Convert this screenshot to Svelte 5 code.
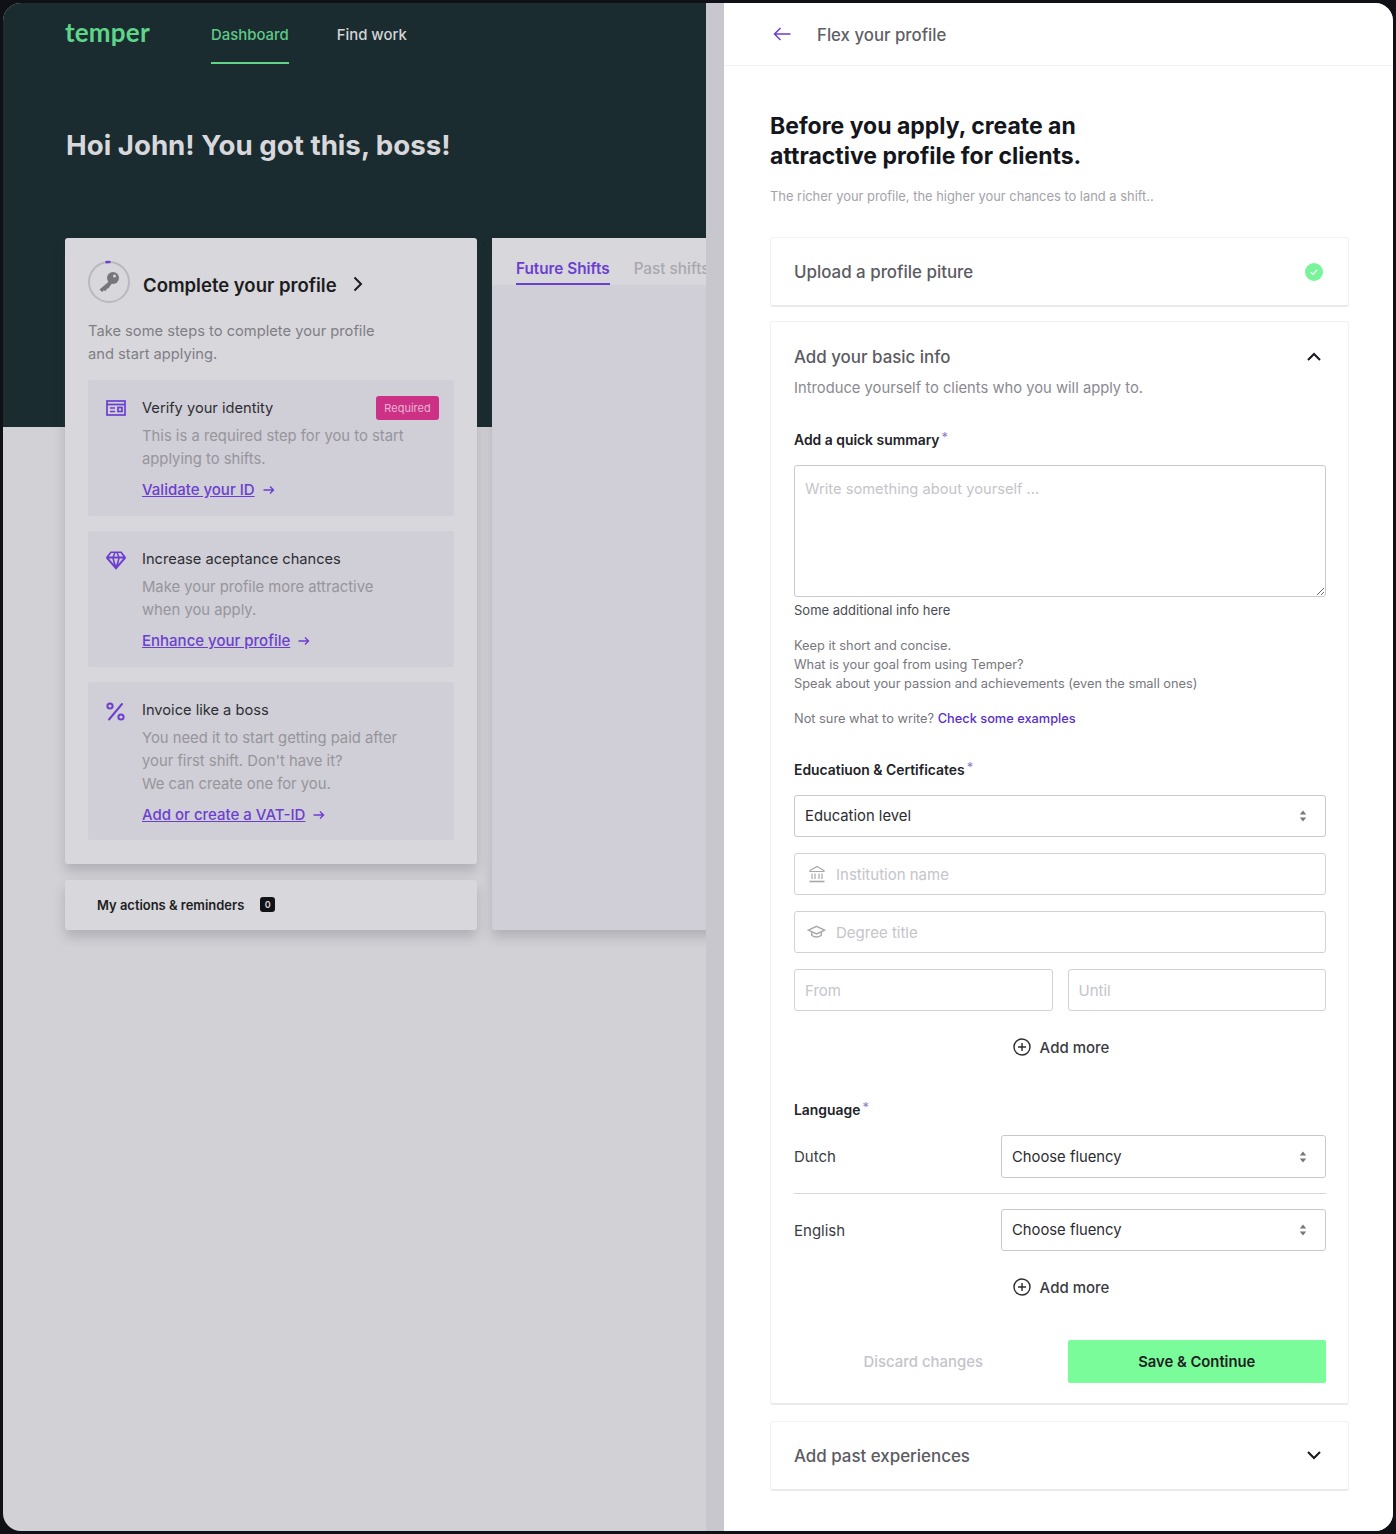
<script lang="ts">
	const steps = [
		{
			icon: 'id',
			title: 'Verify your identity',
			lines: ['This is a required step for you to start', 'applying to shifts.'],
			link: 'Validate your ID',
			required: true
		},
		{
			icon: 'gem',
			title: 'Increase aceptance chances',
			lines: ['Make your profile more attractive', 'when you apply.'],
			link: 'Enhance your profile'
		},
		{
			icon: 'pct',
			title: 'Invoice like a boss',
			lines: ["You need it to start getting paid after", "your first shift. Don't have it?", 'We can create one for you.'],
			link: 'Add or create a VAT-ID'
		}
	];
</script>

{#snippet updown()}
	<svg class="updown" width="8" height="12" viewBox="0 0 8 12"><path d="M4 0.5 7.2 4.5H0.8Z M4 11.5 0.8 7.5H7.2Z" fill="#77767d" /></svg>
{/snippet}

{#snippet addMore()}
	<div class="add-more">
		<svg width="18" height="18" viewBox="0 0 18 18" fill="none" stroke="#2b2c31" stroke-width="1.4"><circle cx="9" cy="9" r="8" /><path d="M9 5v8M5 9h8" /></svg>
		<span>Add more</span>
	</div>
{/snippet}

<div class="window">
	<div class="page">
		<header class="hero">
			<nav>
				<span class="logo">temper</span>
				<span class="tab active">Dashboard</span>
				<span class="tab">Find work</span>
			</nav>
			<h1>Hoi John! You got this, boss!</h1>
		</header>

		<div class="columns">
			<div class="col">
				<section class="profile card">
					<div class="profile-head">
						<svg class="ring" width="44" height="44" viewBox="0 0 44 44" fill="none">
							<circle cx="22" cy="22" r="20" stroke="#b9b8bf" stroke-width="2" />
							<path d="M18.5 2.3a20 20 0 0 1 5-.2" stroke="#6b3fd0" stroke-width="2.4" />
							<circle cx="26" cy="18" r="6" fill="#77767c" />
							<path d="M22.5 21 12.500 29.500l2.500 2.500 2-1.800 1.500 1 1.500-2.500 1.500-.5 3.500-5Z" fill="#77767c" />
							<circle cx="27.500" cy="16" r="1.500" fill="#d8d7dc" />
						</svg>
						<h2>Complete your profile</h2>
						<svg class="chev" width="12" height="16" viewBox="0 0 12 16" fill="none" stroke="#1b1c21" stroke-width="2"><path d="M2.500 1.500 9 8l-6.500 6.500" /></svg>
					</div>
					<p class="profile-desc">Take some steps to complete your profile<br />and start applying.</p>

					<div class="steps">
						{#each steps as step}
							<article class="step">
								<div class="step-icon">
									{#if step.icon === 'id'}
										<svg width="20" height="16" viewBox="0 0 20 16" fill="none" stroke="#6b3fd0" stroke-width="1.700">
											<rect x="1" y="1" width="18" height="14" />
											<path d="M1 4.500h18" />
											<path d="M4 8h5M4 11.500h5" />
											<rect x="12" y="7.500" width="4" height="4" />
										</svg>
									{:else if step.icon === 'gem'}
										<svg width="20" height="19" viewBox="0 0 20 19" fill="#6b3fd0">
											<path fill-rule="evenodd" d="M4.500 0.500h11L19.800 6v1.500L10 18.800 0.200 7.500V6ZM5.400 2 2.800 5.600H6.500L8 2ZM12 2l1.500 3.600h3.700L14.600 2ZM9.600 2 8.100 5.600h3.800L10.400 2ZM2.900 7.600 7.800 13.200 6.300 7.600ZM7.900 7.600l2.100 7 2.100-7ZM13.700 7.600l-1.500 5.600 4.900-5.600Z" />
										</svg>
									{:else}
										<svg width="19" height="19" viewBox="0 0 19 19" fill="none" stroke="#6b3fd0" stroke-width="2">
											<circle cx="4" cy="4" r="2.600" />
											<circle cx="15" cy="15" r="2.600" />
											<path d="M16 2 3 17.500" stroke-linecap="round" />
										</svg>
									{/if}
								</div>
								<div class="step-body">
									<div class="step-title">
										<h3>{step.title}</h3>
										{#if step.required}<span class="required">Required</span>{/if}
									</div>
									<p>
										{#each step.lines as line}{line}<br />{/each}
									</p>
									<div class="step-link">
										<a href="#top">{step.link}</a>
										<svg width="12" height="10" viewBox="0 0 12 10" fill="none" stroke="#6b3fd0" stroke-width="1.400"><path d="M0.500 5h10M7 1.500 10.500 5 7 8.500" /></svg>
									</div>
								</div>
							</article>
						{/each}
					</div>
				</section>

				<section class="actions card">
					<span>My actions &amp; reminders</span>
					<span class="count">0</span>
				</section>
			</div>

			<section class="shifts">
				<div class="shift-tabs">
					<span class="shift-tab active">Future Shifts</span>
					<span class="shift-tab">Past shifts</span>
				</div>
			</section>
		</div>
	</div>

	<div class="gutter"></div>

	<aside class="panel">
		<div class="panel-head">
			<svg width="18" height="14" viewBox="0 0 18 14" fill="none" stroke="#6b3fd0" stroke-width="1.500"><path d="M17.500 7H1.500M7.500 1 1.500 7l6 6" /></svg>
			<span>Flex your profile</span>
		</div>

		<div class="panel-body">
			<h2 class="panel-title">Before you apply, create an<br />attractive profile for clients.</h2>
			<p class="panel-sub">The richer your profile, the higher your chances to land a shift..</p>

			<section class="acc acc-row upload">
				<h3>Upload a profile piture</h3>
				<svg width="18" height="18" viewBox="0 0 18 18" fill="none"><circle cx="9" cy="9" r="9" fill="#78f59a" /><path d="M5.800 9.300 8 11.400l4.200-4.800" stroke="#fff" stroke-width="1.300" /></svg>
			</section>

			<section class="acc basic">
				<div class="basic-head">
					<h3>Add your basic info</h3>
					<svg width="14" height="9" viewBox="0 0 14 9" fill="none" stroke="#17181d" stroke-width="2"><path d="M1 8 7 2l6 6" /></svg>
				</div>
				<p class="basic-sub">Introduce yourself to clients who you will apply to.</p>

				<div class="label summary-label">Add a quick summary<sup>*</sup></div>
				<textarea placeholder="Write something about yourself ..."></textarea>
				<div class="help">Some additional info here</div>
				<p class="tips">
					Keep it short and concise.<br />
					What is your goal from using Temper?<br />
					Speak about your passion and achievements (even the small ones)
				</p>
				<p class="tips not-sure">Not sure what to write? <a href="#top">Check some examples</a></p>

				<div class="label edu-label">Educatiuon &amp; Certificates<sup>*</sup></div>
				<div class="fields">
					<div class="field select">Education level {@render updown()}</div>
					<div class="field ph">
						<svg class="bank" width="18" height="18" viewBox="0 0 18 18" fill="none" stroke="#a9a8ae" stroke-width="1.200">
							<path d="M2 5.500 9 1.500l7 4v1H2Z" />
							<path d="M4 8.500v5.500M7 8.500v5.500M11 8.500v5.500M14 8.500v5.500" />
							<path d="M1.500 16.500h15" stroke-width="1.600" />
						</svg>
						<input placeholder="Institution name" />
					</div>
					<div class="field ph">
						<svg class="cap" width="19" height="16" viewBox="0 0 20 16" fill="none" stroke="#a9a8ae" stroke-width="1.500">
							<path d="M1.500 6 10 2l8.500 4L10 10Z" />
							<path d="M5 8v3.500c2.800 2.400 7.200 2.400 10 0V8" />
						</svg>
						<input placeholder="Degree title" />
					</div>
					<div class="field-pair">
						<div class="field ph"><input placeholder="From" /></div>
						<div class="field ph"><input placeholder="Until" /></div>
					</div>
				</div>
				{@render addMore()}

				<div class="label lang-label">Language<sup>*</sup></div>
				<div class="lang-row">
					<span>Dutch</span>
					<div class="field select">Choose fluency {@render updown()}</div>
				</div>
				<div class="lang-row second">
					<span>English</span>
					<div class="field select">Choose fluency {@render updown()}</div>
				</div>
				{@render addMore()}

				<div class="form-actions">
					<span class="discard">Discard changes</span>
					<button>Save &amp; Continue</button>
				</div>
			</section>

			<section class="acc acc-row past">
				<h3>Add past experiences</h3>
				<svg width="14" height="9" viewBox="0 0 14 9" fill="none" stroke="#17181d" stroke-width="2"><path d="M1 1l6 6 6-6" /></svg>
			</section>
		</div>
	</aside>
</div>

<style>
	:global(body) {
		margin: 0;
		background: #0f1117;
		font-family: Inter, 'Noto Sans', sans-serif;
	}

	.window {
		box-sizing: border-box;
		width: 1390px;
		height: 1528px;
		margin: 3px;
		display: flex;
		border-radius: 18px;
		overflow: hidden;
		background: #d2d1d6;
	}

	.page {
		width: 703px;
		flex: none;
		overflow: hidden;
	}

	.gutter {
		width: 18px;
		flex: none;
		background: #c8c7cd;
	}

	.hero {
		height: 424px;
		box-sizing: border-box;
		padding-left: 62px;
		background: #1a2c30;
	}

	nav {
		display: flex;
		align-items: flex-start;
		height: 61px;
	}

	.logo {
		width: 146px;
		margin-top: 14px;
		font-family: Lato, sans-serif;
		font-size: 26px;
		line-height: 30px;
		font-weight: 700;
		color: #5fd589;
		letter-spacing: 0.2px;
	}

	.tab {
		box-sizing: border-box;
		height: 61px;
		margin-right: 48px;
		padding-top: 22px;
		font-size: 14.900px;
		line-height: 20px;
		font-weight: 500;
		color: #d4d4d7;
	}

	.tab.active {
		color: #5fc986;
		border-bottom: 2px solid #5fd589;
	}

	.hero h1 {
		margin: 63px 0 0 1px;
		font-size: 27.700px;
		line-height: 36px;
		font-weight: 700;
		color: #d8d7db;
	}

	.columns {
		display: flex;
		gap: 15px;
		margin: -189px 0 0 62px;
		align-items: flex-start;
	}

	.col {
		width: 412px;
		flex: none;
		display: flex;
		flex-direction: column;
		gap: 16px;
	}

	.card {
		background: #d8d7dc;
		border-radius: 3px;
		box-shadow: 0 7px 12px rgba(60, 60, 70, 0.22);
	}

	.profile {
		box-sizing: border-box;
		height: 626px;
		padding: 22px 23px;
	}

	.profile-head {
		display: flex;
		align-items: center;
		height: 44px;
	}

	.profile-head .ring {
		margin-left: -1px;
	}

	.profile-head h2 {
		margin: 5px 15px 0 12px;
		font-size: 18.500px;
		font-weight: 600;
		color: #1b1c21;
	}

	.profile-head .chev {
		margin-top: 4px;
	}

	.profile-desc {
		margin: 16px 0 14px;
		font-size: 14.700px;
		line-height: 23px;
		color: #7f7e85;
	}

	.steps {
		display: flex;
		flex-direction: column;
		gap: 15px;
	}

	.step {
		display: flex;
		box-sizing: border-box;
		padding: 17px 15px 15px 18px;
		background: #d0ced6;
		border-radius: 3px;
	}

	.step:last-child {
		padding-bottom: 14px;
	}

	.step-icon {
		width: 36px;
		flex: none;
		padding-top: 3px;
	}

	.step-body {
		flex: 1;
	}

	.step-title {
		display: flex;
		justify-content: space-between;
		align-items: center;
		height: 22px;
	}

	.step h3 {
		margin: 0;
		font-size: 14.650px;
		font-weight: 400;
		color: #2d2e33;
	}

	.required {
		box-sizing: border-box;
		width: 63px;
		height: 24px;
		margin-top: -1px;
		text-align: center;
		background: #cc3186;
		border-radius: 3px;
		color: #e9b4d2;
		font-size: 11px;
		line-height: 24px;
	}

	.step p {
		margin: 6px 0 7px;
		font-size: 14.800px;
		line-height: 23px;
		color: #96959c;
	}

	.step-link {
		display: flex;
		align-items: center;
		gap: 8px;
	}

	.step-link a {
		font-size: 15px;
		line-height: 23px;
		font-weight: 500;
		color: #6b3fd0;
		text-decoration: underline;
	}

	.actions {
		display: flex;
		align-items: center;
		gap: 16px;
		box-sizing: border-box;
		height: 50px;
		padding: 0 0 1px 32px;
		font-size: 12.950px;
		font-weight: 600;
		color: #1d1e23;
	}

	.count {
		width: 15px;
		height: 15px;
		background: #111216;
		border-radius: 3px;
		color: #d8d7dc;
		font-size: 9px;
		line-height: 15px;
		text-align: center;
	}

	.shifts {
		width: 300px;
		height: 692px;
		flex: none;
		background: #d0ced6;
		border-radius: 3px;
		box-shadow: 0 7px 12px rgba(60, 60, 70, 0.22);
	}

	.shift-tabs {
		display: flex;
		gap: 24px;
		height: 47px;
		padding-left: 24px;
		background: #d8d7dc;
		overflow: hidden;
	}

	.shift-tab {
		box-sizing: border-box;
		height: 47px;
		padding-top: 21px;
		font-size: 15.300px;
		line-height: 20px;
		font-weight: 500;
		white-space: nowrap;
		color: #a9a8ae;
	}

	.shift-tab.active {
		font-weight: 600;
		color: #6b3fd0;
		border-bottom: 2px solid #6b3fd0;
	}

	.panel {
		flex: 1;
		min-width: 0;
		background: #fff;
	}

	.panel-head {
		display: flex;
		align-items: center;
		gap: 26px;
		height: 62px;
		padding-left: 49px;
		border-bottom: 1px solid #f1f1f3;
		font-size: 16.800px;
		font-weight: 500;
		color: #5f5f66;
	}

	.panel-head span {
		margin-top: 1px;
	}

	.panel-body {
		padding: 45px 44px 0 46px;
	}

	.panel-title {
		margin: 0;
		font-size: 23px;
		line-height: 30px;
		font-weight: 700;
		color: #14161b;
	}

	.panel-sub {
		margin: 16px 0 30px;
		font-size: 12.900px;
		line-height: 20px;
		color: #a4a3aa;
	}

	.acc {
		box-sizing: border-box;
		margin-bottom: 16px;
		background: #fff;
		border: 1px solid #f2f2f4;
		border-bottom: 2px solid #ebebee;
		border-radius: 3px;
	}

	.acc h3 {
		margin: 0;
		font-size: 16.900px;
		font-weight: 500;
		color: #5b5b62;
	}

	.acc-row {
		display: flex;
		justify-content: space-between;
		align-items: center;
		height: 70px;
		padding: 0 25px 0 23px;
	}

	.upload {
		margin-bottom: 14px;
	}

	.past svg {
		margin-right: 2px;
	}

	.basic {
		height: 1084px;
		padding: 0 22px 0 23px;
	}

	.basic-head {
		display: flex;
		justify-content: space-between;
		align-items: center;
		height: 26px;
		margin-top: 22px;
		padding-right: 5px;
	}

	.basic-head svg {
		margin-top: -2px;
	}

	.basic-sub {
		margin: 7px 0 0;
		font-size: 14.750px;
		line-height: 22px;
		color: #8a8990;
	}

	.label {
		font-size: 13.900px;
		line-height: 20px;
		font-weight: 600;
		color: #222328;
	}

	.label sup {
		margin-left: 2px;
		font-size: 13px;
		font-weight: 400;
		line-height: 0;
		vertical-align: 3px;
		color: #8f7bd0;
	}

	.summary-label {
		margin-top: 31px;
	}

	textarea {
		display: block;
		box-sizing: border-box;
		width: 100%;
		height: 132px;
		margin-top: 15px;
		padding: 12px 10px;
		border: 1px solid #c9c8d0;
		border-radius: 3px;
		outline: none;
		font: 14.700px/22px Inter, sans-serif;
	}

	textarea::placeholder,
	input::placeholder {
		color: #c5c4ca;
		opacity: 1;
	}

	.help {
		margin-top: 4px;
		font-size: 13px;
		line-height: 19px;
		color: #4a4b50;
	}

	.tips {
		margin: 16px 0 0;
		font-size: 12.800px;
		line-height: 19px;
		color: #77777e;
	}

	.not-sure a {
		font-weight: 500;
		color: #5a2fc8;
		text-decoration: none;
	}

	.edu-label {
		margin-top: 32px;
	}

	.fields {
		display: flex;
		flex-direction: column;
		gap: 16px;
		margin-top: 15px;
	}

	.field {
		box-sizing: border-box;
		display: flex;
		align-items: center;
		height: 42px;
		padding: 0 10px;
		border: 1px solid #d2d1d8;
		border-radius: 3px;
		font-size: 14.800px;
		color: #2b2c31;
	}

	.select {
		justify-content: space-between;
		padding-right: 18px;
		border-color: #c9c8d0;
	}

	.ph {
		gap: 10px;
	}

	.bank {
		margin-left: 3px;
	}

	.cap {
		margin-left: 2px;
	}

	.ph input {
		flex: 1;
		width: 0;
		min-width: 0;
		padding: 0;
		border: none;
		outline: none;
		font: 15px Inter, sans-serif;
	}

	.field-pair {
		display: grid;
		grid-template-columns: 1fr 1fr;
		gap: 15px;
	}

	.add-more {
		display: flex;
		align-items: center;
		justify-content: center;
		gap: 9px;
		margin: 25px 0 0;
		padding-left: 2px;
		height: 22px;
		font-size: 15px;
		font-weight: 500;
		color: #3a3b40;
	}

	.lang-label {
		margin-top: 42px;
	}

	.lang-row {
		display: flex;
		align-items: center;
		justify-content: space-between;
		margin-top: 15px;
		padding-bottom: 15px;
		border-bottom: 1px solid #d9d9dd;
		font-size: 15px;
		color: #3a3b40;
	}

	.lang-row .field {
		width: 325px;
		height: 43px;
	}

	.lang-row.second {
		padding-bottom: 0;
		margin-top: 15px;
		border-bottom: none;
	}

	.lang-row.second .field {
		height: 42px;
	}

	.form-actions {
		display: grid;
		grid-template-columns: 1fr 1fr;
		gap: 15px;
		align-items: center;
		margin-top: 42px;
	}

	.discard {
		text-align: center;
		font-size: 14.900px;
		font-weight: 500;
		color: #c5c4ca;
	}

	button {
		height: 43px;
		border: none;
		border-radius: 2px;
		background: #7bfc9b;
		font: 600 14.800px Inter, sans-serif;
		color: #1d1e23;
	}
</style>
